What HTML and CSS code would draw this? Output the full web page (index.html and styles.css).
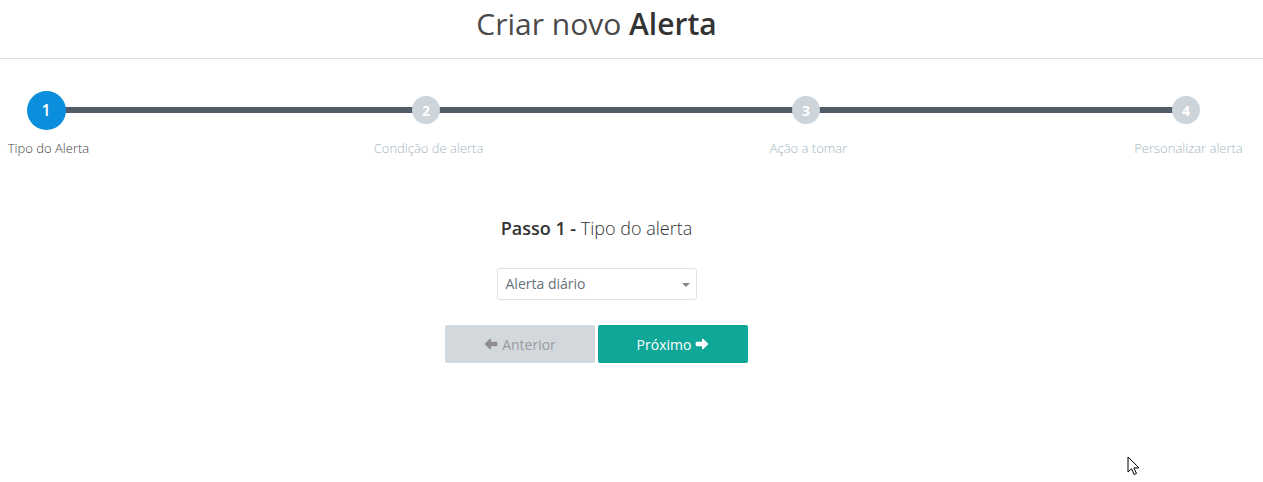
FILE: index.html
```html
<!DOCTYPE html>
<html lang="pt">
<head>
<meta charset="utf-8">
<title>Criar novo Alerta</title>
<link rel="stylesheet" href="styles.css">
</head>
<body>
<header class="header">
  <h1 class="title">Criar novo <strong>Alerta</strong></h1>
</header>

<div class="steps">
  <div class="step active">
    <div class="dot-wrap"><span class="dot">1</span></div>
    <span class="label">Tipo do Alerta</span>
  </div>
  <div class="step">
    <div class="dot-wrap"><span class="dot">2</span></div>
    <span class="label">Condição de alerta</span>
  </div>
  <div class="step">
    <div class="dot-wrap"><span class="dot">3</span></div>
    <span class="label">Ação a tomar</span>
  </div>
  <div class="step">
    <div class="dot-wrap"><span class="dot">4</span></div>
    <span class="label">Personalizar alerta</span>
  </div>
</div>

<main class="form">
  <h2 class="step-title"><strong>Passo 1 -</strong> Tipo do alerta</h2>
  <div class="select">
    <span class="select-text">Alerta diário</span>
    <span class="caret"></span>
  </div>
  <div class="buttons">
    <button class="btn btn-prev" type="button">
      <svg class="ico" viewBox="0 0 14 14" width="14" height="14"><path d="M12.5 5.6H6.2V2.6L1.5 7l4.7 4.4V8.4h6.3z" fill="currentColor" stroke="currentColor" stroke-width="1.6" stroke-linejoin="round"/></svg>
      Anterior
    </button>
    <button class="btn btn-next" type="button">
      Próximo
      <svg class="ico" viewBox="0 0 14 14" width="14" height="14"><path d="M1.5 5.6h6.3V2.6L12.5 7l-4.7 4.4V8.4H1.5z" fill="currentColor" stroke="currentColor" stroke-width="1.6" stroke-linejoin="round"/></svg>
    </button>
  </div>
</main>

<svg class="cursor" viewBox="0 0 13 20" width="13" height="20"><path d="M1 1v15l3.5-3.3 2.6 5.8 2.4-1-2.6-5.6H12z" fill="#fff" stroke="#000" stroke-width="1" stroke-linejoin="miter"/></svg>
</body>
</html>
```

FILE: styles.css
```css
* { box-sizing: border-box; }

html, body {
  margin: 0;
  padding: 0;
  background: #fff;
}

body {
  font-family: "Open Sans", "Noto Sans", sans-serif;
  color: #333;
  position: relative;
  height: 482px;
  overflow: hidden;
}

.header {
  height: 59px;
  border-bottom: 1px solid #dcdcdc;
  display: flex;
  justify-content: center;
  padding-right: 70px;
}

.title {
  margin: 0;
  font-size: 30px;
  line-height: 48px;
  font-weight: 400;
  color: #4a4a4a;
}

.title strong {
  font-weight: 600;
  color: #333;
}

.steps {
  position: relative;
  display: flex;
  justify-content: space-between;
  padding: 0 77px 0 46px;
  margin-top: 31px;
}

.steps::before {
  content: "";
  position: absolute;
  left: 46px;
  right: 77px;
  top: 17px;
  height: 6px;
  background: #515c68;
}

.step {
  width: 0;
  display: flex;
  flex-direction: column;
  align-items: center;
  position: relative;
}

.dot-wrap {
  height: 40px;
  display: flex;
  align-items: center;
  justify-content: center;
}

.dot {
  width: 28px;
  height: 28px;
  flex: none;
  border-radius: 50%;
  background: #cdd5db;
  color: #fff;
  font-size: 14px;
  font-weight: 700;
  display: flex;
  align-items: center;
  justify-content: center;
}

.step.active .dot {
  width: 39px;
  height: 39px;
  background: #0b8fdc;
  font-size: 16px;
  font-weight: 600;
}

.label {
  margin-top: 9px;
  padding-left: 5px;
  font-size: 13px;
  line-height: 18px;
  white-space: nowrap;
  color: #a5b6c0;
  font-weight: 300;
}

.step.active .label {
  color: #444;
}

.form {
  display: flex;
  flex-direction: column;
  align-items: center;
  padding-right: 70px;
}

.step-title {
  margin: 59px 0 0;
  font-size: 18px;
  line-height: 24px;
  font-weight: 300;
  color: #333;
}

.step-title strong {
  font-weight: 600;
  color: #333;
}

.select {
  margin-top: 28px;
  width: 200px;
  height: 32px;
  border: 1px solid #dfe1e5;
  border-radius: 3px;
  display: flex;
  align-items: center;
  justify-content: space-between;
  padding: 0 6px 0 8px;
}

.select-text {
  font-size: 14px;
  line-height: 30px;
  color: #69727c;
}

.caret {
  width: 0;
  height: 0;
  border-left: 4px solid transparent;
  border-right: 4px solid transparent;
  border-top: 4px solid #888;
  margin-top: 2px;
}

.buttons {
  margin-top: 25px;
  display: flex;
  gap: 3px;
}

.btn {
  width: 150px;
  height: 38px;
  border: 0;
  border-radius: 2px;
  font-family: inherit;
  font-size: 14px;
  display: flex;
  align-items: center;
  justify-content: center;
  gap: 4px;
  padding: 0;
}

.btn-prev {
  background: #d3d8dc;
  color: #9a9a9f;
}

.btn-prev .ico {
  color: #8e8c92;
}

.btn-next {
  background: #0ea798;
  color: #fff;
  font-weight: 500;
}

.cursor {
  position: absolute;
  left: 1127px;
  top: 456px;
}
```
